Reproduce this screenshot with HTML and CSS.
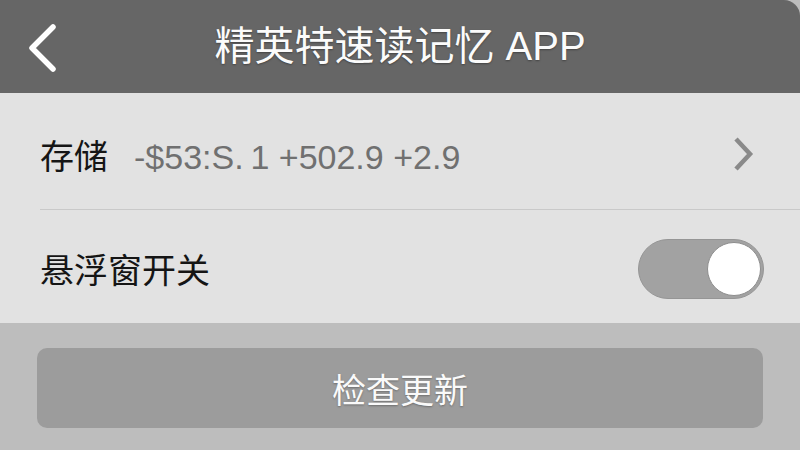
FILE: index.html
```html
<!DOCTYPE html>
<html lang="zh-CN">
<head>
<meta charset="utf-8">
<title>精英特速读记忆 APP</title>
<link rel="stylesheet" href="styles.css">
</head>
<body>
<div class="app">
  <header class="topbar">
    <div class="back">
      <svg width="34" height="50" viewBox="0 0 34 50"><polyline points="27,4 6,25 27,46" fill="none" stroke="#fff" stroke-width="5.5" stroke-linecap="round" stroke-linejoin="round"/></svg>
    </div>
    <h1 class="title">精英特速读记忆 APP</h1>
    <div></div>
  </header>
  <section class="list">
    <div class="row row-store">
      <div class="row-main">
        <span class="label">存储</span>
        <span class="value">-$53:S.&#8201;1 +502.9 +2.9</span>
      </div>
      <svg class="chev" width="24" height="36" viewBox="0 0 24 36"><polyline points="5,3 19,18 5,33" fill="none" stroke="#8a8a8a" stroke-width="4.5" stroke-linejoin="miter"/></svg>
    </div>
    <div class="row row-float">
      <span class="label">悬浮窗开关</span>
      <div class="toggle"><div class="knob"></div></div>
    </div>
  </section>
  <footer class="bottom">
    <button class="update">检查更新</button>
  </footer>
</div>
</body>
</html>
```

FILE: styles.css
```css
html, body {
  margin: 0;
  padding: 0;
  background: #bdbdbd;
}
.app {
  width: 800px;
  height: 450px;
  display: flex;
  flex-direction: column;
  font-family: "Liberation Sans", "Noto Sans CJK SC", sans-serif;
  overflow: hidden;
  border-top-right-radius: 16px;
}
.topbar {
  height: 93px;
  flex: none;
  background: #666666;
  display: grid;
  grid-template-columns: 1fr auto 1fr;
  align-items: center;
}
.back {
  padding-left: 26px;
  padding-top: 2px;
  display: flex;
  align-items: center;
}
.title {
  margin: 0;
  color: #fbfbfb;
  font-size: 40px;
  font-weight: normal;
  line-height: 1;
  padding-bottom: 2px;
  text-shadow: 0 1px 2px rgba(0,0,0,0.35);
}
.list {
  background: #e2e2e2;
  height: 230px;
  flex: none;
  display: flex;
  flex-direction: column;
}
.row {
  display: flex;
  align-items: center;
  justify-content: space-between;
  margin-left: 40px;
  padding-right: 37px;
}
.row-store {
  height: 117px;
  box-sizing: border-box;
  padding-top: 6px;
  padding-right: 45px;
  border-bottom: 1.5px solid #c9c9c9;
}
.row-main {
  display: flex;
  align-items: baseline;
  gap: 26px;
}
.label {
  font-family: "Noto Sans CJK SC", sans-serif;
  font-size: 34px;
  color: #151515;
}
.value {
  font-size: 34px;
  color: #707070;
}
.row-float {
  flex: 1;
  padding-top: 4px;
}
.toggle {
  width: 120px;
  height: 58px;
  border-radius: 30px;
  background: #a2a2a2;
  border: 1.5px solid #959595;
  display: flex;
  align-items: center;
  justify-content: flex-end;
  padding: 0 2px;
  margin-right: -1px;
}
.knob {
  width: 54px;
  height: 54px;
  border-radius: 50%;
  background: #ffffff;
  border: 1.5px solid #8d8d8d;
  box-sizing: border-box;
}
.bottom {
  flex: 1;
  background: #bdbdbd;
  padding: 25px 37px 0 37px;
}
.update {
  width: 100%;
  height: 80px;
  border: none;
  border-radius: 10px;
  background: #9c9c9c;
  color: #fafafa;
  font-family: "Noto Sans CJK SC", sans-serif;
  font-size: 34px;
  padding: 0;
  text-shadow: 0 1px 2px rgba(0,0,0,0.3);
}
```
